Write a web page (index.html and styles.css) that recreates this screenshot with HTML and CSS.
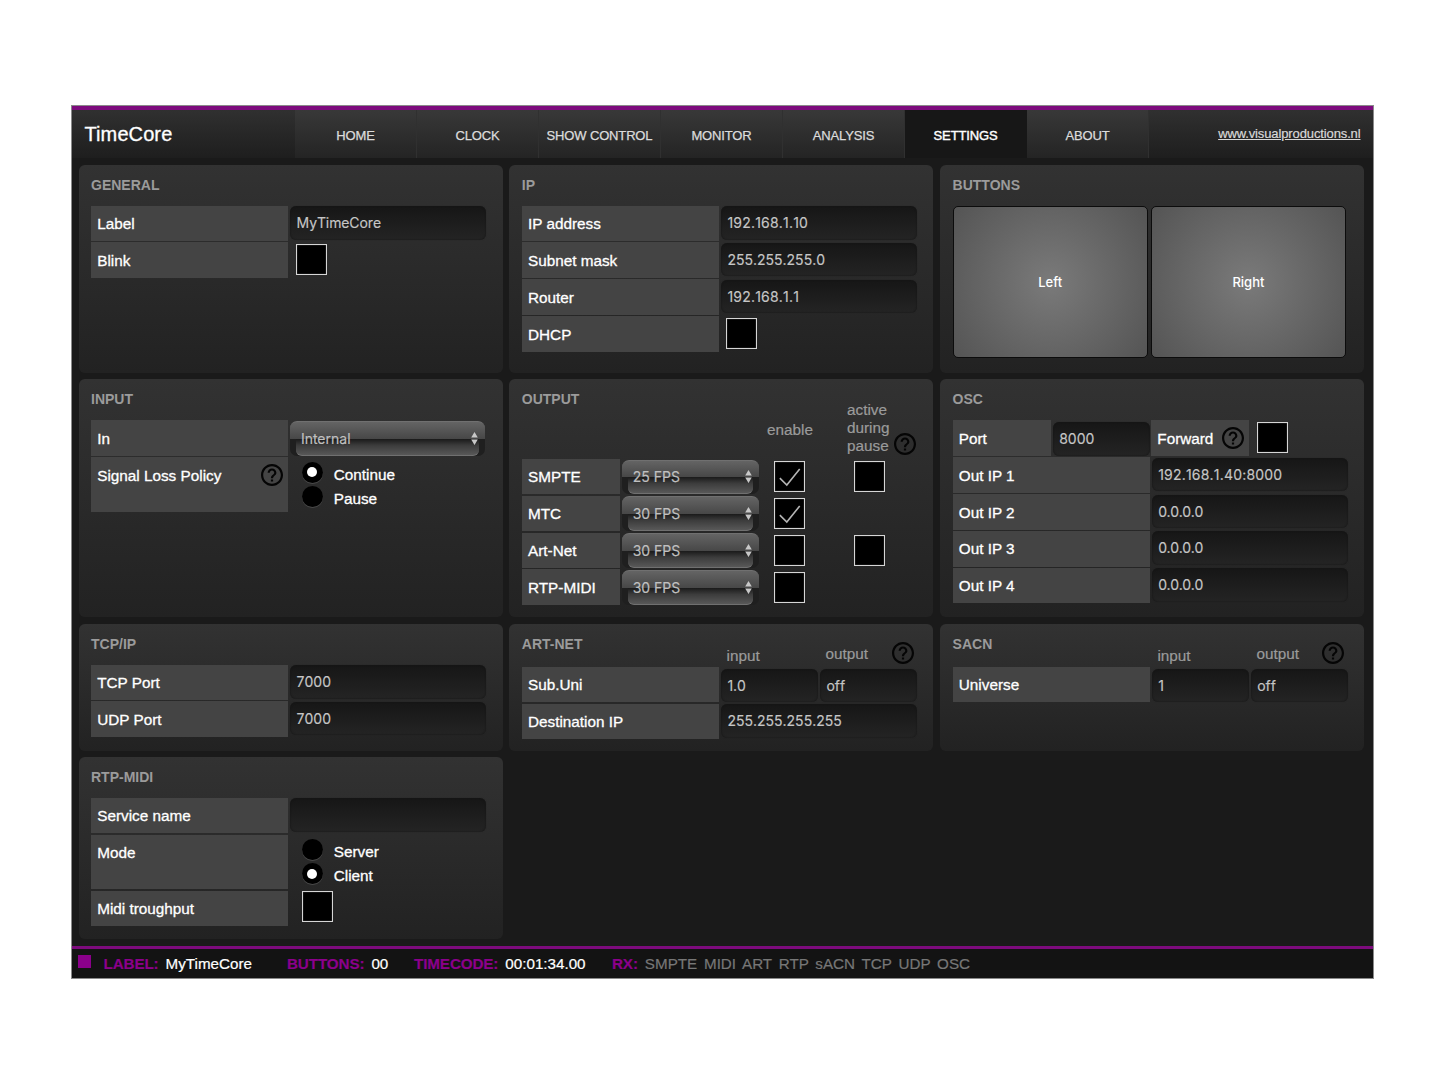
FILE: index.html
```html
<!DOCTYPE html>
<html lang="en">
<head>
<meta charset="utf-8">
<title>TimeCore</title>
<link rel="stylesheet" href="styles.css">
</head>
<body>
<svg class="defs" width="0" height="0" aria-hidden="true">
  <symbol id="help" viewBox="2 2 20 20"><path d="M11 18h2v-2h-2v2zm1-16C6.48 2 2 6.48 2 12s4.480 10 10 10 10-4.480 10-10S17.520 2 12 2zm0 18c-4.410 0-8-3.590-8-8s3.590-8 8-8 8 3.590 8 8-3.590 8-8 8zm0-14c-2.210 0-4 1.790-4 4h2c0-1.100.900-2 2-2s2 .900 2 2c0 2-3 1.750-3 5h2c0-2.250 3-2.500 3-5 0-2.210-1.790-4-4-4z"/></symbol>
  <symbol id="arrows" viewBox="0 0 7 13"><path d="M3.500 0L6.800 5.400H.200zM3.500 13L.200 7.600h6.600z"/></symbol>
  <symbol id="check" viewBox="0 0 27 27"><path d="M4.500 15L11 21.500L23 6.500" fill="none" stroke="#b4b4b4" stroke-width="1.500"/></symbol>
</svg>
<div class="app">
  <header class="header">
    <h1 class="brand">TimeCore</h1>
    <nav class="nav">
      <a class="tab">HOME</a>
      <a class="tab">CLOCK</a>
      <a class="tab">SHOW CONTROL</a>
      <a class="tab">MONITOR</a>
      <a class="tab">ANALYSIS</a>
      <a class="tab active">SETTINGS</a>
      <a class="tab">ABOUT</a>
    </nav>
    <a class="site">www.visualproductions.nl</a>
  </header>

  <main class="panels">
    <section class="panel">
      <h2 class="title">GENERAL</h2>
      <div class="row"><span class="label">Label</span><span class="field name">MyTimeCore</span></div>
      <div class="row"><span class="label">Blink</span><span class="box"></span></div>
    </section>

    <section class="panel">
      <h2 class="title">IP</h2>
      <div class="row"><span class="label">IP address</span><span class="field ip">192.168.1.10</span></div>
      <div class="row"><span class="label">Subnet mask</span><span class="field">255.255.255.0</span></div>
      <div class="row"><span class="label">Router</span><span class="field ip">192.168.1.1</span></div>
      <div class="row"><span class="label">DHCP</span><span class="box"></span></div>
    </section>

    <section class="panel">
      <h2 class="title">BUTTONS</h2>
      <div class="pads"><span class="pad">Left</span><span class="pad">Right</span></div>
    </section>

    <section class="panel">
      <h2 class="title">INPUT</h2>
      <div class="row"><span class="label">In</span><span class="select wide"><span class="value">Internal</span><svg class="arrows"><use href="#arrows"/></svg></span></div>
      <div class="row tall">
        <span class="label">Signal Loss Policy<svg class="help"><use href="#help"/></svg></span>
        <div class="radios">
          <span class="option"><i class="radio on"></i>Continue</span>
          <span class="option"><i class="radio"></i>Pause</span>
        </div>
      </div>
    </section>

    <section class="panel">
      <div class="heading output">
        <h2 class="title">OUTPUT</h2>
        <span class="col enable">enable</span>
        <span class="col pause">active during pause</span>
        <svg class="help"><use href="#help"/></svg>
      </div>
      <div class="row"><span class="label half">SMPTE</span><span class="select"><span class="value">25 FPS</span><svg class="arrows"><use href="#arrows"/></svg></span><span class="box en"><svg class="check"><use href="#check"/></svg></span><span class="box pa"></span></div>
      <div class="row"><span class="label half">MTC</span><span class="select"><span class="value">30 FPS</span><svg class="arrows"><use href="#arrows"/></svg></span><span class="box en"><svg class="check"><use href="#check"/></svg></span></div>
      <div class="row"><span class="label half">Art-Net</span><span class="select"><span class="value">30 FPS</span><svg class="arrows"><use href="#arrows"/></svg></span><span class="box en"></span><span class="box pa"></span></div>
      <div class="row"><span class="label half">RTP-MIDI</span><span class="select"><span class="value">30 FPS</span><svg class="arrows"><use href="#arrows"/></svg></span><span class="box en"></span></div>
    </section>

    <section class="panel">
      <h2 class="title">OSC</h2>
      <div class="row"><span class="label half">Port</span><span class="field short low">8000</span><span class="label half forward">Forward<svg class="help"><use href="#help"/></svg></span><span class="box"></span></div>
      <div class="row"><span class="label">Out IP 1</span><span class="field ip">192.168.1.40:8000</span></div>
      <div class="row"><span class="label">Out IP 2</span><span class="field zero">0.0.0.0</span></div>
      <div class="row"><span class="label">Out IP 3</span><span class="field zero">0.0.0.0</span></div>
      <div class="row"><span class="label">Out IP 4</span><span class="field zero">0.0.0.0</span></div>
    </section>

    <section class="panel">
      <h2 class="title">TCP/IP</h2>
      <div class="row"><span class="label">TCP Port</span><span class="field">7000</span></div>
      <div class="row"><span class="label">UDP Port</span><span class="field">7000</span></div>
    </section>

    <section class="panel">
      <div class="heading io">
        <h2 class="title">ART-NET</h2>
        <span class="col in">input</span>
        <span class="col out">output</span>
        <svg class="help"><use href="#help"/></svg>
      </div>
      <div class="row"><span class="label">Sub.Uni</span><span class="field short low">1.0</span><span class="field short low">off</span></div>
      <div class="row"><span class="label">Destination IP</span><span class="field">255.255.255.255</span></div>
    </section>

    <section class="panel">
      <div class="heading io">
        <h2 class="title">SACN</h2>
        <span class="col in">input</span>
        <span class="col out">output</span>
        <svg class="help"><use href="#help"/></svg>
      </div>
      <div class="row"><span class="label">Universe</span><span class="field short low">1</span><span class="field short low">off</span></div>
    </section>

    <section class="panel">
      <h2 class="title">RTP-MIDI</h2>
      <div class="row"><span class="label">Service name</span><span class="field"></span></div>
      <div class="row tall">
        <span class="label">Mode</span>
        <div class="radios">
          <span class="option"><i class="radio"></i>Server</span>
          <span class="option"><i class="radio on"></i>Client</span>
        </div>
      </div>
      <div class="row"><span class="label">Midi troughput</span><span class="box indent"></span></div>
    </section>
  </main>

  <footer class="status">
    <i class="led"></i>
    <span class="item w-label"><b>LABEL:</b><span>MyTimeCore</span></span>
    <span class="item w-buttons"><b>BUTTONS:</b><span>00</span></span>
    <span class="item w-time"><b>TIMECODE:</b><span>00:01:34.00</span></span>
    <span class="item"><b>RX:</b><span class="rx">SMPTE MIDI ART RTP sACN TCP UDP OSC</span></span>
  </footer>
</div>
</body>
</html>
```
FILE: styles.css
```css
* { box-sizing: border-box; }

body {
  margin: 0;
  padding: 105px 0 0 71px;
  background: #fff;
  color: #fff;
  font-family: "Liberation Sans", Arial, sans-serif;
  font-size: 15.3px;
}

.defs { display: block; height: 0; }

.app {
  display: flex;
  flex-direction: column;
  width: 1303px;
  height: 874px;
  border: 1px solid #8a8a8a;
  background: #1a1a1a;
}

/* header */
.header {
  display: flex;
  flex: none;
  height: 52px;
  border-top: 4px solid #7d0b7d;
  background: linear-gradient(#303030, #1e1e1e);
}
.brand {
  width: 223px;
  margin: 0;
  padding-left: 12.5px;
  font-size: 20px;
  font-weight: normal;
  line-height: 48px;
  letter-spacing: 0.1px;
  -webkit-text-stroke: 0.3px #fff;
}
.nav { display: flex; }
.tab {
  width: 122px;
  border-right: 1px solid #303030;
  background: linear-gradient(#383838, #242424);
  color: #dcdcdc;
  font-size: 13px;
  line-height: 51px;
  letter-spacing: -0.15px;
  text-align: center;
  -webkit-text-stroke: 0.25px #dcdcdc;
}
.tab.active {
  background: #171717;
  border-right-color: #171717;
  color: #fff;
  -webkit-text-stroke: 0.4px #fff;
}
.site {
  margin-left: auto;
  padding-right: 12.5px;
  color: #d8d8d8;
  font-size: 13px;
  line-height: 47px;
  letter-spacing: -0.12px;
  text-decoration: underline;
  -webkit-text-stroke: 0.2px #d8d8d8;
}

/* panels */
.panels {
  display: grid;
  flex: 1;
  grid-template-columns: repeat(3, 424px);
  grid-template-rows: 208.5px 238px 127px 182.5px;
  gap: 6.3px 6.8px;
  padding: 6.5px 0 0 6.5px;
}
.panel {
  padding: 0 12.5px;
  border-radius: 6px;
  background: linear-gradient(#323232, #222);
}
.title {
  margin: 0;
  color: #9b9b9b;
  font-size: 14px;
  font-weight: bold;
  line-height: 41px;
}
.row {
  display: flex;
  align-items: flex-start;
  height: 35.6px;
  margin-bottom: 1.3px;
}
.row.tall { height: 54.6px; }
.label {
  flex: none;
  display: flex;
  justify-content: space-between;
  width: 197px;
  height: 100%;
  padding: 8.5px 5px 0 6.2px;
  background: #444;
  line-height: 20px;
  -webkit-text-stroke: 0.3px #fff;
}
.label.half { width: 98px; }
.label .help { margin-top: -1.5px; }
.help {
  flex: none;
  width: 22px;
  height: 22px;
  fill: #050505;
  stroke: none;
}
.field {
  width: 196px;
  height: 33.5px;
  margin: 0.5px 0 0 2px;
  padding-left: 6.6px;
  border-radius: 6px;
  background: linear-gradient(#161616, #242424);
  box-shadow: inset 0 0 2px #141414, 0 0 1px #262626;
  color: #c6c6c6;
  font-family: Inter, sans-serif;
  font-size: 14px;
  font-kerning: none;
  line-height: 34px;
  -webkit-text-stroke: 0.15px #c6c6c6;
}
.field.name { letter-spacing: -0.1px; }
.field.ip { letter-spacing: 0.2px; }
.field.zero { letter-spacing: -0.4px; }
.field.short { width: 97px; }
.field.low { margin-top: 2px; }
.label.forward { margin-left: 1.5px; }
.box {
  flex: none;
  width: 31px;
  height: 31px;
  margin: 2px 0 0 7.5px;
  border: 1px solid #d6d6d6;
  background: #000;
  box-shadow: inset 0 0 1px #aaa;
}
.box.en { margin: 2.5px 0 0 14.5px; }
.box.pa { margin: 2.5px 0 0 49px; }
.box.indent { margin: 0 0 0 14px; }
.check { display: block; width: 100%; height: 100%; }

/* glossy select: wide cap on top, narrower lip below */
.select {
  position: relative;
  display: flex;
  align-items: center;
  justify-content: space-between;
  width: 137px;
  height: 34.5px;
  margin: 0.8px 0 0 2.4px;
  padding: 0 7px 0 10.5px;
  border-radius: 7px;
  background: #1f1f1f;
  color: #c0c0c0;
  font-family: Inter, sans-serif;
  font-size: 14px;
  -webkit-text-stroke: 0.15px #c0c0c0;
}
.select.wide { width: 195px; }
.select::before,
.select::after {
  content: "";
  position: absolute;
}
.select::before {
  inset: 0 0 17px;
  border-top: 1px solid #707070;
  border-radius: 7px 7px 0 0;
  background: linear-gradient(#646464, #474747);
}
.select::after {
  inset: 17.5px 6px 0;
  border-bottom: 1px solid #707070;
  border-radius: 0 0 6px 6px;
  background: linear-gradient(#1a1a1a, #3c3c3c 40%, #585858);
}
.value, .arrows { position: relative; z-index: 1; }
.arrows { width: 7px; height: 13px; fill: #c8c8c8; }

/* radios */
.radios { padding: 4px 0 0 13.7px; }
.option {
  display: flex;
  align-items: center;
  height: 24px;
  padding-top: 3px;
  line-height: 20px;
  -webkit-text-stroke: 0.3px #fff;
}
.radio {
  display: flex;
  align-items: center;
  justify-content: center;
  width: 21px;
  height: 21px;
  margin: -5px 11px 0 0;
  border-radius: 50%;
  background: #000;
  box-shadow: 0 1px 0 #4a4a4a;
}
.radio.on::before {
  content: "";
  width: 10px;
  height: 10px;
  border-radius: 50%;
  background: #fff;
}

/* pads */
.pads { display: flex; gap: 3px; }
.pad {
  width: 195.2px;
  height: 152px;
  border: 1px solid #0c0c0c;
  border-radius: 5px;
  background: radial-gradient(circle, #7a7a7a, #555 120px);
  font-family: Inter, sans-serif;
  font-size: 13px;
  font-weight: 500;
  line-height: 151px;
  text-align: center;
}

/* column headings */
.heading { display: flex; }
.col {
  color: #9b9b9b;
  line-height: 18px;
  -webkit-text-stroke: 0.2px #9b9b9b;
}
.heading.output { height: 79.5px; }
.output .title { width: 245.2px; }
.output .enable { width: 80px; padding-top: 42px; }
.output .pause { width: 47.5px; padding-top: 22px; }
.output .help { margin-top: 54px; }
.heading.io { height: 43.3px; }
.io .title { width: 204.8px; }
.io .in { width: 99px; padding-top: 23.4px; }
.io .out { width: 66px; padding-top: 21.5px; }
.io .help { margin-top: 18px; }

/* status bar */
.status {
  display: flex;
  flex: none;
  height: 32px;
  padding-left: 6px;
  border-top: 3px solid #7d0b7d;
  background: #131313;
  font-size: 15.2px;
  line-height: 30px;
}
.led {
  width: 13px;
  height: 13px;
  margin: 6px 12.5px 0 0;
  background: #8b008b;
}
.item { display: flex; gap: 7px; -webkit-text-stroke: 0.2px; }
.item b { color: #8b008b; letter-spacing: -0.1px; }
.w-label { width: 183.5px; }
.w-buttons { width: 127px; }
.w-time { width: 198px; }
.rx { color: #777; word-spacing: 2.6px; }
```
